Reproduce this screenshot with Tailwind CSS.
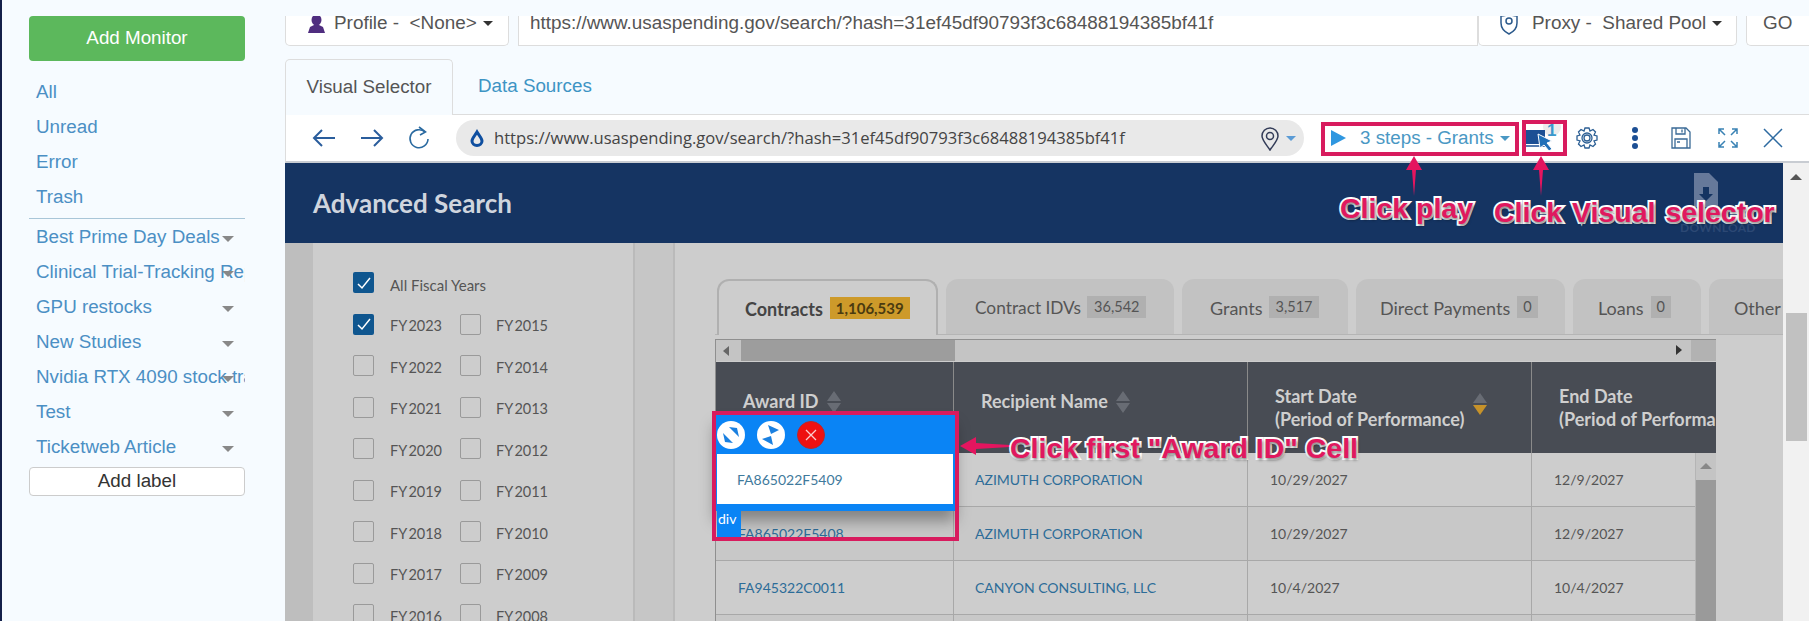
<!DOCTYPE html>
<html lang="en">
<head>
  <meta charset="UTF-8">
  <title>Visual Selector</title>
  <script src="https://cdn.jsdelivr.net/npm/@tailwindcss/browser@4"></script>
</head>
<body class="relative w-[1809px] h-[621px] overflow-hidden bg-[#f6fbff] font-['Liberation_Sans',sans-serif]">
  <div class="flex h-full">
    <!-- Sidebar -->
    <aside class="w-[285px] shrink-0 h-full border-l-2 border-[#14204a] pl-[27px] pr-[40px] pt-[16px] text-[18.800px] text-[#4b8fc4]">
      <div class="h-[45px] rounded-[4px] bg-[#5cb85c] text-white flex items-center justify-center">Add Monitor</div>
      <div class="mt-[14px] pl-[7px] flex flex-col">
        <a class="h-[35px] flex items-center">All</a>
        <a class="h-[35px] flex items-center">Unread</a>
        <a class="h-[35px] flex items-center">Error</a>
        <a class="h-[35px] flex items-center">Trash</a>
      </div>
      <div class="mt-[3px] border-t border-[#a9c6d8]"></div>
      <div class="mt-[1px] flex flex-col">
        <div class="relative h-[35px] pl-[7px] flex items-center whitespace-nowrap overflow-hidden">Best Prime Day Deals<i class="absolute left-[193px] top-[16px] border-x-[6px] border-t-[6px] border-x-transparent border-t-[#888]"></i></div>
        <div class="relative h-[35px] pl-[7px] flex items-center whitespace-nowrap overflow-hidden">Clinical Trial-Tracking Reports<i class="absolute left-[193px] top-[16px] border-x-[6px] border-t-[6px] border-x-transparent border-t-[#888]"></i></div>
        <div class="relative h-[35px] pl-[7px] flex items-center whitespace-nowrap overflow-hidden">GPU restocks<i class="absolute left-[193px] top-[16px] border-x-[6px] border-t-[6px] border-x-transparent border-t-[#888]"></i></div>
        <div class="relative h-[35px] pl-[7px] flex items-center whitespace-nowrap overflow-hidden">New Studies<i class="absolute left-[193px] top-[16px] border-x-[6px] border-t-[6px] border-x-transparent border-t-[#888]"></i></div>
        <div class="relative h-[35px] pl-[7px] flex items-center whitespace-nowrap overflow-hidden">Nvidia RTX 4090 stock tracker<i class="absolute left-[193px] top-[16px] border-x-[6px] border-t-[6px] border-x-transparent border-t-[#888]"></i></div>
        <div class="relative h-[35px] pl-[7px] flex items-center whitespace-nowrap overflow-hidden">Test<i class="absolute left-[193px] top-[16px] border-x-[6px] border-t-[6px] border-x-transparent border-t-[#888]"></i></div>
        <div class="relative h-[35px] pl-[7px] flex items-center whitespace-nowrap overflow-hidden">Ticketweb Article<i class="absolute left-[193px] top-[16px] border-x-[6px] border-t-[6px] border-x-transparent border-t-[#888]"></i></div>
      </div>
      <div class="mt-[2px] h-[29px] rounded-[4px] border border-[#ccc] bg-white text-[#333] flex items-center justify-center">Add label</div>
    </aside>

    <!-- Main -->
    <main class="flex-1 min-w-0 flex flex-col">
      <!-- Profile / URL / Proxy row -->
      <div class="mt-[16px] h-[30px] flex text-[18.900px] text-[#555] shrink-0">
        <div class="w-[224px] overflow-hidden bg-white border border-t-0 border-[#ddd] rounded-b-[5px] flex items-center pl-[22px] pb-[14px]">
          <svg class="w-[17px] h-[18px] mr-[9px] shrink-0" viewBox="0 0 17 18" fill="#4f2d7f"><ellipse cx="8.500" cy="5" rx="5" ry="5.500"/><path d="M0 18 L2 12 L6 10 H11 L15 12 L17 18 Z"/></svg>
          <span class="whitespace-nowrap">Profile -&nbsp; &lt;None&gt;</span><i class="ml-[6px] border-x-[5px] border-t-[5px] border-x-transparent border-t-[#333]"></i>
        </div>
        <div class="ml-[9px] w-[960px] overflow-hidden bg-white border border-t-0 border-[#ddd] flex items-center pl-[11px] pb-[14px] whitespace-nowrap">https://www.usaspending.gov/search/?hash=31ef45df90793f3c68488194385bf41f</div>
        <div class="w-[259px] overflow-hidden bg-white border border-t-0 border-[#ddd] rounded-b-[5px] flex items-center pl-[21px] pb-[14px]">
          <svg class="w-[18px] h-[22px] mr-[14px] shrink-0" viewBox="0 0 18 22" fill="none" stroke="#2c5a8c" stroke-width="1.500"><path d="M1 3 C4 3 7 2 9 1 C11 2 14 3 17 3 L17 10 C17 15 13 19 9 21 C5 19 1 15 1 10 Z"/><circle cx="9" cy="8" r="3"/></svg>
          <span class="whitespace-nowrap">Proxy -&nbsp; Shared Pool</span><i class="ml-[6px] border-x-[5px] border-t-[5px] border-x-transparent border-t-[#333]"></i>
        </div>
        <div class="ml-[9px] flex-1 overflow-hidden bg-white border border-t-0 border-r-0 border-[#ddd] rounded-bl-[5px] flex items-center pl-[16px] pb-[14px]">GO</div>
      </div>

      <!-- Tabs -->
      <div class="mt-[13px] h-[56px] flex items-stretch text-[18.800px] shrink-0 border-b border-[#ddd]">
        <div class="w-[168px] -mb-px border border-b-0 border-[#ddd] rounded-t-[5px] bg-[#f6fbff] flex items-center justify-center text-[#555]">Visual Selector</div>
        <div class="ml-[25px] flex items-center text-[#3d94c4]">Data Sources</div>
      </div>

      <!-- Toolbar -->
      <div class="h-[48px] bg-white border-l border-[#ddd] border-b-2 border-b-[#c8ccd2] flex items-center shrink-0 relative">
        <svg class="ml-[26px] w-[24px] h-[24px]" viewBox="0 0 24 24" fill="none" stroke="#2a5d9c" stroke-width="2"><path d="M23 12 H2 M10 4 L2 12 L10 20"/></svg>
        <svg class="ml-[24px] w-[24px] h-[24px]" viewBox="0 0 24 24" fill="none" stroke="#2a5d9c" stroke-width="2"><path d="M1 12 H22 M14 4 L22 12 L14 20"/></svg>
        <svg class="ml-[24px] w-[22px] h-[24px]" viewBox="0 0 22 24" fill="none" stroke="#2a6aa0" stroke-width="1.600"><path d="M17 6 A9 9 0 1 0 20 13"/><path d="M11 1 L17.500 6 L12 9"/></svg>
        <div class="ml-[26px] w-[848px] h-[36px] rounded-[18px] bg-[#e9e9e9] flex items-center pl-[14px] relative">
          <svg class="w-[14px] h-[18px]" viewBox="0 0 14 18" fill="none" stroke="#0f4fa0" stroke-width="3"><path d="M7 3 C9 6.500 12 9 12 12 A5 4.500 0 0 1 2 12 C2 9 5 6.500 7 3 Z"/></svg>
          <span class="ml-[10px] text-[16.600px] text-[#444] font-['Open_Sans',sans-serif] whitespace-nowrap">https://www.usaspending.gov/search/?hash=31ef45df90793f3c68488194385bf41f</span>
          <svg class="absolute left-[805px] top-[7px] w-[18px] h-[24px]" viewBox="0 0 18 24" fill="none" stroke="#333c58" stroke-width="1.500"><path d="M9 23 C5 17 1 13 1 9 A8 8 0 0 1 17 9 C17 13 13 17 9 23 Z"/><circle cx="9" cy="9" r="3.500"/></svg>
          <i class="absolute left-[830px] top-[16px] border-x-[5px] border-t-[5px] border-x-transparent border-t-[#5b9bd5]"></i>
        </div>
        <div class="ml-[17px] w-[198px] h-[34px] flex items-center pl-[10px] text-[18.800px] text-[#4a98c4]">
          <i class="border-y-[8px] border-l-[15px] border-y-transparent border-l-[#2f97e0]"></i>
          <span class="ml-[14px] whitespace-nowrap">3 steps - Grants</span><i class="ml-[6px] border-x-[5px] border-t-[5px] border-x-transparent border-t-[#4a98c4]"></i>
        </div>
        <svg class="ml-[3px] w-[40px] h-[34px]" viewBox="0 0 40 34"><circle cx="30" cy="6" r="9" fill="#ececec"/><rect x="4" y="9" width="19" height="14" fill="#1c4f94"/><path d="M1 25 H24" stroke="#1c4f94" stroke-width="1.500"/><path d="M16 13 L30 20 L25 22 L30 28 L27 30 L22 24 L18 27 Z" fill="#1f6fb8" stroke="#fff" stroke-width="1"/><text x="25" y="15" font-size="17" font-weight="700" fill="#3b98cc" font-family="Liberation Sans">1</text></svg>
        <svg class="ml-[13px] w-[24px] h-[24px]" viewBox="0 0 24 24" fill="none" stroke="#2c5f94" stroke-width="1.300"><path d="M10 2 H14 L15 5 L18 3.500 L20.500 6 L19 9 L22 10 V14 L19 15 L20.500 18 L18 20.500 L15 19 L14 22 H10 L9 19 L6 20.500 L3.500 18 L5 15 L2 14 V10 L5 9 L3.500 6 L6 3.500 L9 5 Z"/><circle cx="12" cy="12" r="5"/><circle cx="12" cy="12" r="3"/></svg>
        <svg class="ml-[32px] w-[8px] h-[24px]" viewBox="0 0 8 24" fill="#1c4f94"><circle cx="4" cy="4" r="3"/><circle cx="4" cy="12" r="3"/><circle cx="4" cy="20" r="3"/></svg>
        <svg class="ml-[32px] w-[20px] h-[22px]" viewBox="0 0 20 22" fill="none" stroke="#3a6a96" stroke-width="1.300"><path d="M1 1 H15 L19 5 V21 H1 Z"/><path d="M5 1 V7 H14 V1 M11 2.500 V5.500"/><path d="M4 21 V12 H16 V21 M6 15 H9"/></svg>
        <svg class="ml-[27px] w-[20px] h-[20px]" viewBox="0 0 20 20" fill="none" stroke="#3a82b4" stroke-width="1.500"><path d="M1 6 V1 H6 M1 1 L7 7 M14 1 H19 V6 M19 1 L13 7 M1 14 V19 H6 M1 19 L7 13 M19 14 V19 H14 M19 19 L13 13"/></svg>
        <svg class="ml-[25px] w-[20px] h-[20px]" viewBox="0 0 20 20" fill="none" stroke="#2d6aa0" stroke-width="1.500"><path d="M1 1 L19 19 M19 1 L1 19"/></svg>
      </div>

      <!-- Page inside the selector -->
      <div class="flex-1 min-h-0 flex">
        <div class="flex-1 min-w-0 flex flex-col">
          <div class="h-[80px] bg-[#153462] flex items-center pl-[28px] relative shrink-0">
            <span class="text-[26px] font-bold text-[#cfd5de] font-['Lato',sans-serif]">Advanced Search</span>
            <svg class="absolute left-[1409px] top-[10px] w-[24px] h-[34px]" viewBox="0 0 24 34" fill="#66799a"><path d="M0 0 H15 L24 9 V34 H0 Z"/><path d="M9 14 H15 V21 H19 L12 28 L5 21 H9 Z" fill="#153462"/></svg>
            <span class="absolute left-[1395px] top-[56px] text-[12px] font-bold text-[#2c4874] font-['Lato',sans-serif] tracking-wide">DOWNLOAD</span>
          </div>
          <div class="flex-1 min-h-0 flex bg-[#cdcdcd] overflow-hidden">
            <!-- Filter column -->
            <div class="w-[28px] bg-[#bebebe] shrink-0"></div>
            <div class="w-[320px] shrink-0 pl-[40px] pt-[19px] font-['Lato',sans-serif] text-[14.500px] text-[#555]">
              <div class="h-[41.500px] flex items-center text-[15px]"><i class="w-[21px] h-[21px] rounded-[2px] bg-[#0f568f] mr-[16px] flex items-center justify-center"><svg class="w-[14px] h-[14px]" viewBox="0 0 14 14" fill="none" stroke="#fff" stroke-width="1.500"><path d="M1 8 L5 12 L13 2"/></svg></i><span class="mt-[4px]">All Fiscal Years</span></div>
              <div class="h-[41.500px] flex items-center [word-spacing:-2px]"><i class="w-[21px] h-[21px] rounded-[2px] bg-[#0f568f] mr-[16px] flex items-center justify-center"><svg class="w-[14px] h-[14px]" viewBox="0 0 14 14" fill="none" stroke="#fff" stroke-width="1.500"><path d="M1 8 L5 12 L13 2"/></svg></i><span class="w-[70px] mt-[4px]">FY 2023</span><i class="w-[21px] h-[21px] rounded-[2px] border border-[#9a9a9a] mr-[15px]"></i><span class="mt-[4px]">FY 2015</span></div>
              <div class="h-[41.500px] flex items-center [word-spacing:-2px]"><i class="w-[21px] h-[21px] rounded-[2px] border border-[#9a9a9a] mr-[16px]"></i><span class="w-[70px] mt-[4px]">FY 2022</span><i class="w-[21px] h-[21px] rounded-[2px] border border-[#9a9a9a] mr-[15px]"></i><span class="mt-[4px]">FY 2014</span></div>
              <div class="h-[41.500px] flex items-center [word-spacing:-2px]"><i class="w-[21px] h-[21px] rounded-[2px] border border-[#9a9a9a] mr-[16px]"></i><span class="w-[70px] mt-[4px]">FY 2021</span><i class="w-[21px] h-[21px] rounded-[2px] border border-[#9a9a9a] mr-[15px]"></i><span class="mt-[4px]">FY 2013</span></div>
              <div class="h-[41.500px] flex items-center [word-spacing:-2px]"><i class="w-[21px] h-[21px] rounded-[2px] border border-[#9a9a9a] mr-[16px]"></i><span class="w-[70px] mt-[4px]">FY 2020</span><i class="w-[21px] h-[21px] rounded-[2px] border border-[#9a9a9a] mr-[15px]"></i><span class="mt-[4px]">FY 2012</span></div>
              <div class="h-[41.500px] flex items-center [word-spacing:-2px]"><i class="w-[21px] h-[21px] rounded-[2px] border border-[#9a9a9a] mr-[16px]"></i><span class="w-[70px] mt-[4px]">FY 2019</span><i class="w-[21px] h-[21px] rounded-[2px] border border-[#9a9a9a] mr-[15px]"></i><span class="mt-[4px]">FY 2011</span></div>
              <div class="h-[41.500px] flex items-center [word-spacing:-2px]"><i class="w-[21px] h-[21px] rounded-[2px] border border-[#9a9a9a] mr-[16px]"></i><span class="w-[70px] mt-[4px]">FY 2018</span><i class="w-[21px] h-[21px] rounded-[2px] border border-[#9a9a9a] mr-[15px]"></i><span class="mt-[4px]">FY 2010</span></div>
              <div class="h-[41.500px] flex items-center [word-spacing:-2px]"><i class="w-[21px] h-[21px] rounded-[2px] border border-[#9a9a9a] mr-[16px]"></i><span class="w-[70px] mt-[4px]">FY 2017</span><i class="w-[21px] h-[21px] rounded-[2px] border border-[#9a9a9a] mr-[15px]"></i><span class="mt-[4px]">FY 2009</span></div>
              <div class="h-[41.500px] flex items-center [word-spacing:-2px]"><i class="w-[21px] h-[21px] rounded-[2px] border border-[#9a9a9a] mr-[16px]"></i><span class="w-[70px] mt-[4px]">FY 2016</span><i class="w-[21px] h-[21px] rounded-[2px] border border-[#9a9a9a] mr-[15px]"></i><span class="mt-[4px]">FY 2008</span></div>
            </div>
            <div class="w-[42px] bg-[#c6c6c6] shrink-0 border-x-2 border-[#bababa]"></div>

            <!-- Results column -->
            <div class="flex-1 min-w-0 pl-[40px] pt-[36px] font-['Lato',sans-serif] overflow-hidden">
              <div class="flex gap-[8px] h-[56px] text-[18px] text-[#555] whitespace-nowrap border-b border-[#b5b5b5]">
                <div class="ml-[2px] w-[221px] shrink-0 -mb-px border-2 border-b-0 border-[#b0b0b0] rounded-t-[12px] bg-[#cdcdcd] flex items-center pl-[26px] pt-[3px] font-bold text-[#444]">Contracts<span class="ml-[7px] -mt-[3px] px-[6px] h-[22px] bg-[#cd9a2a] text-[#4a3a10] text-[15px] flex items-center">1,106,539</span></div>
                <div class="w-[228px] shrink-0 rounded-t-[12px] bg-[#c2c2c2] flex items-center pl-[29px] pt-[3px]"><span class="text-[17.300px]">Contract IDVs</span><span class="ml-[6px] -mt-[3px] px-[7px] h-[22px] bg-[#b0b0b0] text-[14.500px] flex items-center">36,542</span></div>
                <div class="w-[166px] shrink-0 rounded-t-[12px] bg-[#c2c2c2] flex items-center pl-[28px] pt-[3px]">Grants<span class="ml-[6px] -mt-[3px] px-[7px] h-[22px] bg-[#b0b0b0] text-[14.500px] flex items-center">3,517</span></div>
                <div class="w-[209px] shrink-0 rounded-t-[12px] bg-[#c2c2c2] flex items-center pl-[24px] pt-[3px]">Direct Payments<span class="ml-[7px] -mt-[3px] px-[6px] h-[22px] bg-[#b0b0b0] text-[14.500px] flex items-center">0</span></div>
                <div class="w-[128px] shrink-0 rounded-t-[12px] bg-[#c2c2c2] flex items-center pl-[25px] pt-[3px]">Loans<span class="ml-[7px] -mt-[3px] px-[6px] h-[22px] bg-[#b0b0b0] text-[14.500px] flex items-center">0</span></div>
                <div class="w-[120px] shrink-0 rounded-t-[12px] bg-[#c2c2c2] flex items-center pl-[25px] pt-[3px]">Other</div>
              </div>
              <!-- Table -->
              <div class="mt-[4px] w-[1001px] border-l border-t border-[#8f8f8f] relative overflow-hidden h-[290px]">
                <div class="h-[21px] flex items-center bg-[#c4c4c4] relative">
                  <i class="ml-[7px] border-y-[5px] border-r-[6px] border-y-transparent border-r-[#666]"></i>
                  <div class="absolute left-[25px] top-0 w-[214px] h-[21px] bg-[#9d9d9d]"></div>
                  <i class="absolute left-[960px] top-[5px] border-y-[5px] border-l-[6px] border-y-transparent border-l-[#333]"></i>
                  <div class="absolute right-0 top-0 w-[25px] h-[21px] bg-[#b2b2b2]"></div>
                </div>
                <div class="mt-[1px] h-[91px] bg-[#484c54] flex text-[18px] font-bold text-[#cfcfcf] leading-[23px] whitespace-nowrap">
                  <div class="w-[237px] shrink-0 flex items-center pl-[27px] pb-[12px]">Award ID<svg class="ml-[8px] w-[14px] h-[24px]" viewBox="0 0 14 24" fill="#686c74"><path d="M7 1 L14 11 H0 Z M0 13 H14 L7 23 Z"/></svg></div>
                  <div class="w-[294px] shrink-0 border-l border-[#8a8a8a] flex items-center pl-[27px] pb-[12px]">Recipient Name<svg class="ml-[8px] w-[14px] h-[24px]" viewBox="0 0 14 24" fill="#686c74"><path d="M7 1 L14 11 H0 Z M0 13 H14 L7 23 Z"/></svg></div>
                  <div class="w-[284px] shrink-0 border-l border-[#8a8a8a] flex items-center pl-[27px]"><span>Start Date<br>(Period of Performance)</span><svg class="ml-[9px] -mt-[8px] w-[14px] h-[24px]" viewBox="0 0 14 24"><path d="M7 1 L14 11 H0 Z" fill="#686c74"/><path d="M0 13 H14 L7 23 Z" fill="#c6922a"/></svg></div>
                  <div class="flex-1 border-l border-[#8a8a8a] flex items-center pl-[27px] overflow-hidden"><span>End Date<br>(Period of Performance)</span></div>
                </div>
                <div class="flex flex-col text-[14px] text-[#555]">
                  <div class="h-[54px] flex items-center border-b border-[#a8a8a8] bg-[#cdcdcd]">
                    <div class="w-[237px] shrink-0 pl-[22px] text-[#2c6c98]">FA865022F5409</div><div class="w-[294px] shrink-0 h-full flex items-center border-l border-[#a8a8a8] pl-[21px] text-[#2c6c98]">AZIMUTH CORPORATION</div><div class="w-[284px] shrink-0 h-full flex items-center border-l border-[#a8a8a8] pl-[22px]">10/29/2027</div><div class="flex-1 h-full flex items-center border-l border-[#a8a8a8] pl-[22px]">12/9/2027</div>
                  </div>
                  <div class="h-[54px] flex items-center border-b border-[#a8a8a8] bg-[#c8c8c8]">
                    <div class="w-[237px] shrink-0 pl-[22px] text-[#2c6c98]">FA865022F5408</div><div class="w-[294px] shrink-0 h-full flex items-center border-l border-[#a8a8a8] pl-[21px] text-[#2c6c98]">AZIMUTH CORPORATION</div><div class="w-[284px] shrink-0 h-full flex items-center border-l border-[#a8a8a8] pl-[22px]">10/29/2027</div><div class="flex-1 h-full flex items-center border-l border-[#a8a8a8] pl-[22px]">12/9/2027</div>
                  </div>
                  <div class="h-[54px] flex items-center border-b border-[#a8a8a8] bg-[#cdcdcd]">
                    <div class="w-[237px] shrink-0 pl-[22px] text-[#2c6c98]">FA945322C0011</div><div class="w-[294px] shrink-0 h-full flex items-center border-l border-[#a8a8a8] pl-[21px] text-[#2c6c98]">CANYON CONSULTING, LLC</div><div class="w-[284px] shrink-0 h-full flex items-center border-l border-[#a8a8a8] pl-[22px]">10/4/2027</div><div class="flex-1 h-full flex items-center border-l border-[#a8a8a8] pl-[22px]">10/4/2027</div>
                  </div>
                  <div class="h-[54px] flex bg-[#c8c8c8]">
                    <div class="w-[237px] shrink-0"></div><div class="w-[294px] shrink-0 border-l border-[#a8a8a8]"></div><div class="w-[284px] shrink-0 border-l border-[#a8a8a8]"></div><div class="flex-1 border-l border-[#a8a8a8]"></div>
                  </div>
                </div>
                <!-- table's own vertical scrollbar -->
                <div class="absolute right-0 top-[113px] w-[21px] h-[177px] bg-[#c4c4c4] border-l border-[#b5b5b5]">
                  <i class="absolute left-[4px] top-[10px] border-x-[6px] border-b-[6px] border-x-transparent border-b-[#888]"></i>
                  <div class="absolute left-0 top-[27px] w-full h-[150px] bg-[#9a9a9a]"></div>
                </div>
              </div>
            </div>
          </div>
        </div>
        <!-- Page scrollbar -->
        <div class="w-[26px] shrink-0 bg-[#f1f1f1] relative">
          <i class="absolute left-[7px] top-[11px] border-x-[6px] border-b-[6px] border-x-transparent border-b-[#555]"></i>
          <div class="absolute left-[3px] top-[150px] w-[21px] h-[128px] bg-[#c1c1c1]"></div>
        </div>
      </div>
    </main>
  </div>

  <!-- Element selected in the visual selector -->
  <div class="absolute left-[715px] top-[415px] w-[240px] h-[96px] bg-[#0a84f5] shadow-[0_10px_14px_rgba(0,0,0,0.35)]">
    <div class="h-[39px] flex items-center pl-[2px] gap-[12px]">
      <svg class="w-[28px] h-[28px]" viewBox="0 0 28 28"><circle cx="14" cy="14" r="14" fill="#fff"/><path d="M12 6 L20 7 L22 16 Z M6 12 L16 22 L8 21 Z" fill="#1a80e0"/></svg>
      <svg class="w-[28px] h-[28px]" viewBox="0 0 28 28"><circle cx="14" cy="14" r="14" fill="#fff"/><path d="M14 13 L11 4 L22 9 Z M14 15 L5 18 L16 24 Z" fill="#1a80e0"/></svg>
      <svg class="w-[28px] h-[28px]" viewBox="0 0 28 28"><circle cx="14" cy="14" r="13.500" fill="#ee1111" stroke="#b8282c"/><path d="M9 9 L19 19 M19 9 L9 19" stroke="#fff" stroke-width="1.300" opacity=".8"/></svg>
    </div>
    <div class="mx-[2px] h-[50px] bg-white flex items-center pl-[20px] text-[14px] text-[#3f7a9c] font-['Lato',sans-serif]">FA865022F5409</div>
  </div>
  <div class="absolute left-[717px] top-[505px] w-[24px] h-[32px] bg-[#0a84f5] text-white text-[14px] pl-[1px] leading-[18px] pt-[5px] font-['Lato',sans-serif]">div</div>

  <!-- Pink annotations -->
  <div class="absolute left-[712px] top-[411px] w-[247px] h-[130px] border-[4px] border-[#d81b5e]"></div>
  <div class="absolute left-[1321px] top-[122px] w-[198px] h-[34px] border-[4px] border-[#d81b5e]"></div>
  <div class="absolute left-[1522px] top-[120px] w-[45px] h-[36px] border-[4px] border-[#d81b5e]"></div>
  <svg class="absolute left-[1406px] top-[156px] w-[16px] h-[40px]" viewBox="0 0 16 40" fill="#e4155f"><path d="M8 0 L16 14 H10 L8 40 L6 14 H0 Z"/></svg>
  <svg class="absolute left-[1533px] top-[156px] w-[16px] h-[40px]" viewBox="0 0 16 40" fill="#e4155f"><path d="M8 0 L16 14 H10 L8 40 L6 14 H0 Z"/></svg>
  <svg class="absolute left-[960px] top-[437px] w-[50px] h-[18px]" viewBox="0 0 50 18" fill="#e4155f"><path d="M0 9 L16 0 V6 L50 8 V10 L16 12 V18 Z"/></svg>
  <div class="absolute left-[1340px] top-[193px] text-[28.500px] leading-[30px] font-bold text-[#e0185f] [-webkit-text-stroke:4px_white] [paint-order:stroke] [text-shadow:1px_2px_3px_rgba(0,0,0,0.5)] whitespace-nowrap">Click play</div>
  <div class="absolute left-[1494px] top-[197px] text-[28.500px] leading-[30px] font-bold text-[#e0185f] [word-spacing:2px] [-webkit-text-stroke:4px_white] [paint-order:stroke] [text-shadow:1px_2px_3px_rgba(0,0,0,0.5)] whitespace-nowrap">Click Visual selector</div>
  <div class="absolute left-[1010px] top-[433px] text-[28.500px] leading-[30px] font-bold text-[#e0185f] [-webkit-text-stroke:4px_white] [paint-order:stroke] [text-shadow:1px_2px_3px_rgba(0,0,0,0.5)] whitespace-nowrap">Click first "Award ID" Cell</div>
</body>
</html>
